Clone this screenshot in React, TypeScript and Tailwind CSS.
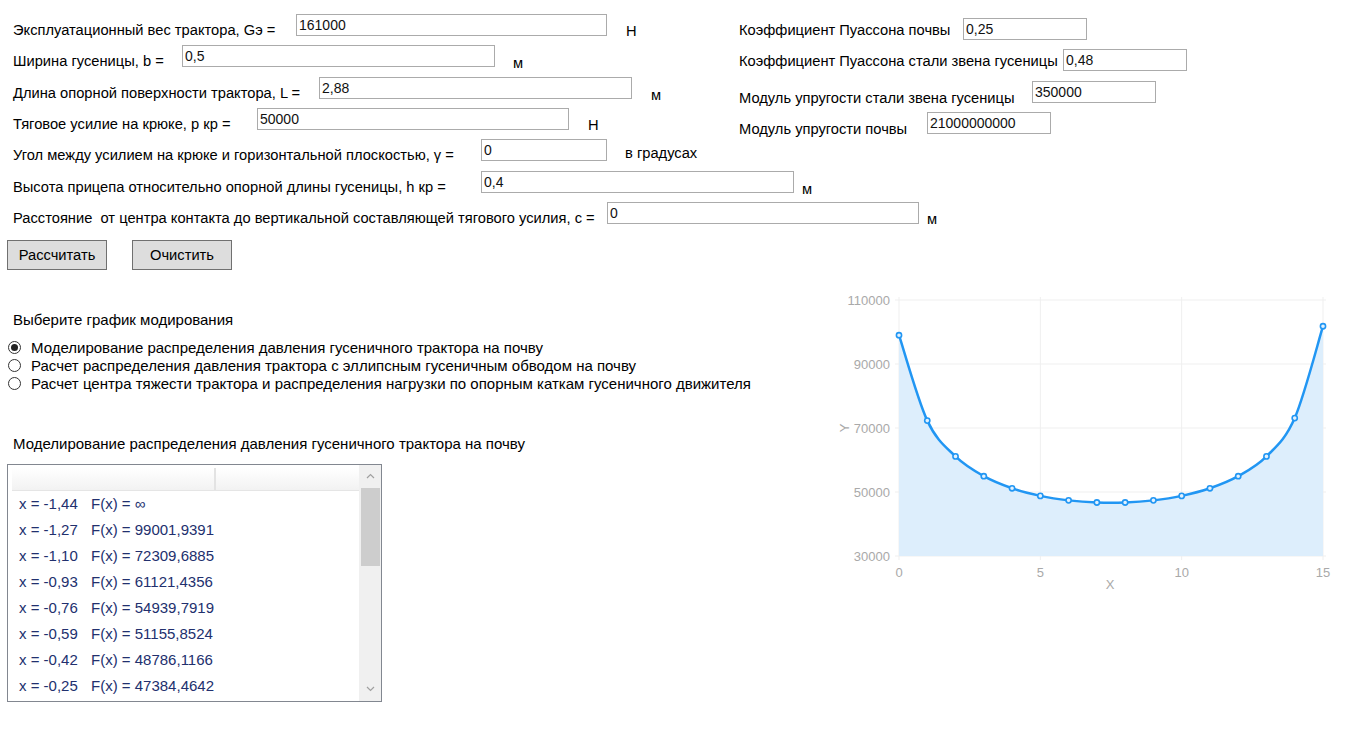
import React from "react";

type Row = {
  label: string;
  labelW: string;
  value: string;
  boxW: string;
  unit: string;
  unitGap: string;
  unitTop: string;
};

const leftRows: Row[] = [
  { label: "Эксплуатационный вес трактора, Gэ =", labelW: "w-[283px]", value: "161000", boxW: "w-[311px]", unit: "Н", unitGap: "ml-[19px]", unitTop: "mt-[7px]" },
  { label: "Ширина гусеницы, b =", labelW: "w-[169px]", value: "0,5", boxW: "w-[313px]", unit: "м", unitGap: "ml-[18px]", unitTop: "mt-[8px]" },
  { label: "Длина опорной поверхности трактора, L =", labelW: "w-[306px]", value: "2,88", boxW: "w-[313px]", unit: "м", unitGap: "ml-[19px]", unitTop: "mt-[8px]" },
  { label: "Тяговое усилие на крюке, р кр =", labelW: "w-[244px]", value: "50000", boxW: "w-[312px]", unit: "Н", unitGap: "ml-[19px]", unitTop: "mt-[7px]" },
  { label: "Угол между усилием на крюке и горизонтальной плоскостью, γ =", labelW: "w-[468px]", value: "0", boxW: "w-[126px]", unit: "в градусах", unitGap: "ml-[18px]", unitTop: "mt-[4px]" },
  { label: "Высота прицепа относительно опорной длины гусеницы, h кр =", labelW: "w-[468px]", value: "0,4", boxW: "w-[313px]", unit: "м", unitGap: "ml-[8px]", unitTop: "mt-[8px]" },
  { label: "Расстояние  от центра контакта до вертикальной составляющей тягового усилия, с =", labelW: "w-[594px]", value: "0", boxW: "w-[312px]", unit: "м", unitGap: "ml-[8px]", unitTop: "mt-[7px]" },
];

const rightRows = [
  { label: "Коэффициент Пуассона почвы", labelW: "w-[224px]", value: "0,25", top: "mt-[2px]" },
  { label: "Коэффициент Пуассона стали звена гусеницы", labelW: "w-[324px]", value: "0,48", top: "mt-[2px]" },
  { label: "Модуль упругости стали звена гусеницы", labelW: "w-[293px]", value: "350000", top: "mt-[7px]" },
  { label: "Модуль упругости почвы", labelW: "w-[188px]", value: "21000000000", top: "mt-[7px]" },
];

const listItems = [
  ["-1,44", "∞"],
  ["-1,27", "99001,9391"],
  ["-1,10", "72309,6885"],
  ["-0,93", "61121,4356"],
  ["-0,76", "54939,7919"],
  ["-0,59", "51155,8524"],
  ["-0,42", "48786,1166"],
  ["-0,25", "47384,4642"],
];

const radios = [
  "Моделирование распределения давления гусеничного трактора на почву",
  "Расчет распределения давления трактора с эллипсным гусеничным обводом на почву",
  "Расчет центра тяжести трактора и распределения нагрузки по опорным каткам гусеничного движителя",
];

function TextBox({ value, w }: { value: string; w: string }) {
  return (
    <input
      readOnly
      defaultValue={value}
      className={`${w} h-[22px] shrink-0 border border-[#ababab] bg-white px-[2px] text-[14px] leading-[20px] text-[#111] outline-none font-['Liberation_Sans',Arial,sans-serif]`}
    />
  );
}

const vals = [
  99001.94, 72309.69, 61121.44, 54939.79, 51155.85, 48786.12, 47384.46, 46720,
  46720, 47384.46, 48786.12, 51155.85, 54939.79, 61121.44, 73100, 101800,
];
const px = (i: number) => 79 + (i * 424) / 15;
const py = (v: number) => 271 - ((v - 30000) * 256) / 80000;

function curvePath() {
  const pts = vals.map((v, i) => [px(i), py(v)]);
  let d = `M${pts[0][0]},${pts[0][1]}`;
  for (let i = 0; i < pts.length - 1; i++) {
    const p0 = pts[i - 1] || pts[i];
    const p1 = pts[i];
    const p2 = pts[i + 1];
    const p3 = pts[i + 2] || p2;
    const c1x = p1[0] + (p2[0] - p0[0]) / 6;
    const c1y = p1[1] + (p2[1] - p0[1]) / 6;
    const c2x = p2[0] - (p3[0] - p1[0]) / 6;
    const c2y = p2[1] - (p3[1] - p1[1]) / 6;
    d += ` C${c1x},${c1y} ${c2x},${c2y} ${p2[0]},${p2[1]}`;
  }
  return { d, pts };
}

function Chart() {
  const { d, pts } = curvePath();
  const yTicks = [110000, 90000, 70000, 50000, 30000];
  const xTicks = [0, 5, 10, 15];
  return (
    <svg width="528" height="320" className="block font-['Liberation_Sans',Arial,sans-serif]">
      {yTicks.map((t) => (
        <g key={t}>
          <line x1={75} x2={506} y1={py(t)} y2={py(t)} stroke="#efefef" strokeWidth="1" />
          <text x={70} y={py(t) + 4.5} textAnchor="end" fontSize="13" fill="#a9a9a9">
            {t}
          </text>
        </g>
      ))}
      {xTicks.map((t) => (
        <g key={t}>
          <line x1={px(t)} x2={px(t)} y1={12} y2={275} stroke="#efefef" strokeWidth="1" />
          <text x={px(t)} y={292} textAnchor="middle" fontSize="13" fill="#a9a9a9">
            {t}
          </text>
        </g>
      ))}
      <path d={`${d} L${px(15)},271 L${px(0)},271 Z`} fill="#ddeefc" />
      <path d={d} fill="none" stroke="#2196f3" strokeWidth="2.5" />
      {pts.map((p, i) => (
        <circle key={i} cx={p[0]} cy={p[1]} r="2.6" fill="#e3f1fd" stroke="#2196f3" strokeWidth="1.6" />
      ))}
      <text x={290} y={304} textAnchor="middle" fontSize="13" fill="#a9a9a9">
        X
      </text>
      <text x={24} y={148} textAnchor="middle" fontSize="13" fill="#a9a9a9" transform="rotate(-90 24 143)">
        Y
      </text>
    </svg>
  );
}

export default function App() {
  return (
    <div className="w-[1348px] h-[742px] overflow-hidden bg-white text-[15px] leading-[20px] text-black font-['Liberation_Sans',Arial,sans-serif]">
      {/* верхняя часть: исходные данные */}
      <div className="flex text-[14.7px]">
        <div className="w-[739px] shrink-0 pt-[14px]">
          <div className="flex flex-col gap-[9.33px] pl-[13px]">
            {leftRows.map((r) => (
              <div key={r.label} className="flex items-start h-[22px]">
                <span className={`${r.labelW} shrink-0 mt-[6px] whitespace-pre`}>{r.label}</span>
                <TextBox value={r.value} w={r.boxW} />
                <span className={`${r.unitGap} ${r.unitTop} whitespace-nowrap`}>{r.unit}</span>
              </div>
            ))}
          </div>
          <div className="flex gap-[25px] pl-[7px] mt-[16px]">
            <button className="w-[100px] h-[30px] border border-[#707070] bg-[#dddddd] text-[14.7px]">Рассчитать</button>
            <button className="w-[100px] h-[30px] border border-[#707070] bg-[#dddddd] text-[14.7px]">Очистить</button>
          </div>
        </div>
        <div className="pt-[18px] flex flex-col gap-[9.33px]">
          {rightRows.map((r) => (
            <div key={r.label} className="flex items-start h-[22px]">
              <span className={`${r.labelW} shrink-0 ${r.top} whitespace-nowrap`}>{r.label}</span>
              <TextBox value={r.value} w="w-[124px]" />
            </div>
          ))}
        </div>
      </div>

      {/* нижняя часть: выбор графика, таблица и график */}
      <div className="flex">
        <div className="w-[820px] shrink-0">
          <div className="pl-[13px] mt-[40px]">Выберите график модирования</div>
          <div className="mt-[9px] pl-[8px] flex flex-col">
            {radios.map((t, i) => (
              <div key={t} className="flex items-center h-[18px]">
                <span className="w-[13px] h-[13px] rounded-full border border-[#333] bg-white flex items-center justify-center shrink-0">
                  {i === 0 && <span className="w-[7px] h-[7px] rounded-full bg-[#222]" />}
                </span>
                <span className="ml-[10px] whitespace-nowrap">{t}</span>
              </div>
            ))}
          </div>
          <div className="pl-[13px] mt-[41px]">Моделирование распределения давления гусеничного трактора на почву</div>
          <div className="ml-[7px] mt-[10px] w-[375px] h-[238px] border border-[#828790] bg-white flex">
            <div className="flex-1 pl-[4px] pt-[3px] overflow-hidden">
              <div className="flex h-[23px] border-b border-[#e5e5e5] bg-gradient-to-b from-white to-[#f2f2f2]">
                <div className="w-[204px] border-r-2 border-[#e3e3e3]" />
                <div className="flex-1" />
              </div>
              {listItems.map(([x, f]) => (
                <div key={x} className="flex items-center h-[26px] pl-[7px] text-[#22306e] whitespace-pre">
                  <span className="w-[72px]">x = {x}</span>
                  <span>F(x) = {f}</span>
                </div>
              ))}
            </div>
            <div className="w-[22px] bg-[#f0f0f0] flex flex-col items-center">
              <div className="h-[23px] flex items-center justify-center">
                <svg width="9" height="6" viewBox="0 0 9 6">
                  <path d="M1 5 L4.5 1.5 L8 5" fill="none" stroke="#a0a0a0" strokeWidth="1.2" />
                </svg>
              </div>
              <div className="w-[19px] h-[78px] bg-[#cdcdcd]" />
              <div className="flex-1" />
              <div className="h-[23px] flex items-center justify-center">
                <svg width="9" height="6" viewBox="0 0 9 6">
                  <path d="M1 1 L4.5 4.5 L8 1" fill="none" stroke="#a0a0a0" strokeWidth="1.2" />
                </svg>
              </div>
            </div>
          </div>
        </div>
        <div className="mt-[15px]">
          <Chart />
        </div>
      </div>
    </div>
  );
}
